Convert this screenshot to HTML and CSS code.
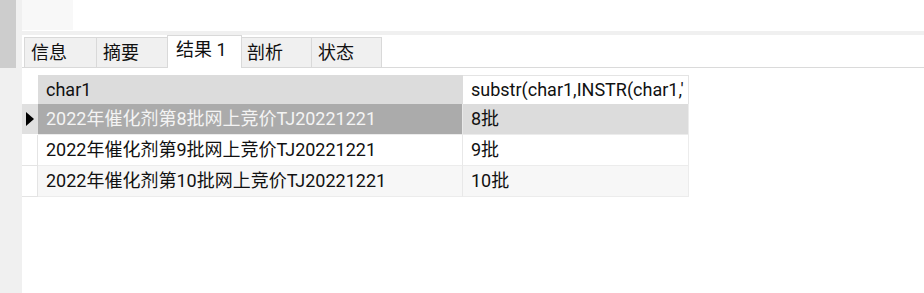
FILE: index.html
```html
<!DOCTYPE html>
<html lang="zh-CN">
<head>
<meta charset="utf-8">
<title>结果</title>
<link rel="stylesheet" href="styles.css">
</head>
<body>
<div class="app">
  <div class="sidebar"><div class="scroll"></div></div>
  <div class="main">
    <div class="toolbar"><div class="tbox"></div></div>
    <div class="band"></div>
    <div class="tabs">
      <div class="tab t1">信息</div>
      <div class="tab t2">摘要</div>
      <div class="tab t3 active">结果 1</div>
      <div class="tab t4">剖析</div>
      <div class="tab t5">状态</div>
    </div>
    <div class="content">
      <div class="grid">
        <div class="ind hdr"></div>
        <div class="cell c1 hdr h1">char1</div>
        <div class="cell c2 hdr h2"><span class="clip">substr(char1,INSTR(char1,'第')+1)</span></div>

        <div class="ind sel"><span class="tri"></span></div>
        <div class="cell c1 row selcell">2022年催化剂第8批网上竞价TJ20221221</div>
        <div class="cell c2 row selrow">8批</div>

        <div class="ind plain"></div>
        <div class="cell c1 row">2022年催化剂第9批网上竞价TJ20221221</div>
        <div class="cell c2 row">9批</div>

        <div class="ind plain"></div>
        <div class="cell c1 row alt">2022年催化剂第10批网上竞价TJ20221221</div>
        <div class="cell c2 row alt">10批</div>
      </div>
    </div>
  </div>
</div>
</body>
</html>
```

FILE: styles.css
```css
html, body {
  margin: 0;
  padding: 0;
  background: #ffffff;
}
body {
  font-family: Roboto, "Noto Sans CJK SC", sans-serif;
  font-size: 18px;
  color: #111111;
}
.app {
  display: flex;
  width: 924px;
  height: 293px;
  overflow: hidden;
}
.sidebar {
  width: 22px;
  flex: none;
  background: #f0f0f0;
}
.scroll {
  width: 16px;
  height: 68px;
  background: #cdcdcd;
}
.main {
  flex: 1;
  display: flex;
  flex-direction: column;
  background: #ffffff;
}
.toolbar {
  height: 31px;
  background: #ffffff;
}
.tbox {
  width: 51px;
  height: 30px;
  background: #f8f8f8;
}
.band {
  height: 4px;
  background: #f0f0f0;
}
.tabs {
  height: 32px;
  border-bottom: 1px solid #dadada;
  display: flex;
  align-items: flex-end;
  padding-left: 2px;
}
.tab {
  box-sizing: border-box;
  height: 31px;
  margin-bottom: -1px;
  margin-right: -1px;
  border: 1px solid #d9d9d9;
  background: #f0f0f0;
  display: flex;
  align-items: center;
  padding-left: 6px;
  line-height: 20px;
  white-space: nowrap;
}
.t1 { width: 73px; }
.t2 { width: 72px; }
.t3 { width: 75px; }
.t4 { width: 71px; padding-left: 5px; }
.t5 { width: 71px; }
.tab.active {
  height: 33px;
  background: #ffffff;
  border-bottom: none;
  padding-left: 8px;
  padding-bottom: 5px;
  position: relative;
  z-index: 1;
}
.content {
  padding-top: 7px;
}
.grid {
  display: grid;
  grid-template-columns: 16px 425px 226px;
  grid-template-rows: 29px 31px 31px 31px;
}
.cell {
  box-sizing: border-box;
  display: flex;
  align-items: center;
  padding-left: 8px;
  white-space: nowrap;
  overflow: hidden;
  line-height: 20px;
}
.ind {
  box-sizing: border-box;
  background: #ffffff;
  display: flex;
  align-items: center;
}
.ind.sel {
  background: #e0e0e0;
  border-bottom: 1px solid #ffffff;
}
.ind.plain {
  border-right: 1px solid #e4e4e4;
  border-bottom: 1px solid #e4e4e4;
}
.tri {
  width: 0;
  height: 0;
  margin-left: 4px;
  border-top: 7px solid transparent;
  border-bottom: 7px solid transparent;
  border-left: 8px solid #000000;
}
.h1 {
  background: #dcdcdc;
}
.h2 {
  background: #ffffff;
  border-top: 1px solid #e4e4e4;
  border-right: 1px solid #e4e4e4;
  padding-right: 4px;
}
.clip {
  display: block;
  overflow: hidden;
  white-space: nowrap;
  width: 100%;
}
.row {
  border-bottom: 1px solid #ececec;
  border-right: 1px solid #ececec;
}
.c1.row {
  border-right: 1px solid #e8e8e8;
}
.selcell {
  background: #ababab;
  color: #f4f4f4;
}
.selrow {
  background: #dcdcdc;
}
.alt {
  background: #f7f7f7;
}
```
